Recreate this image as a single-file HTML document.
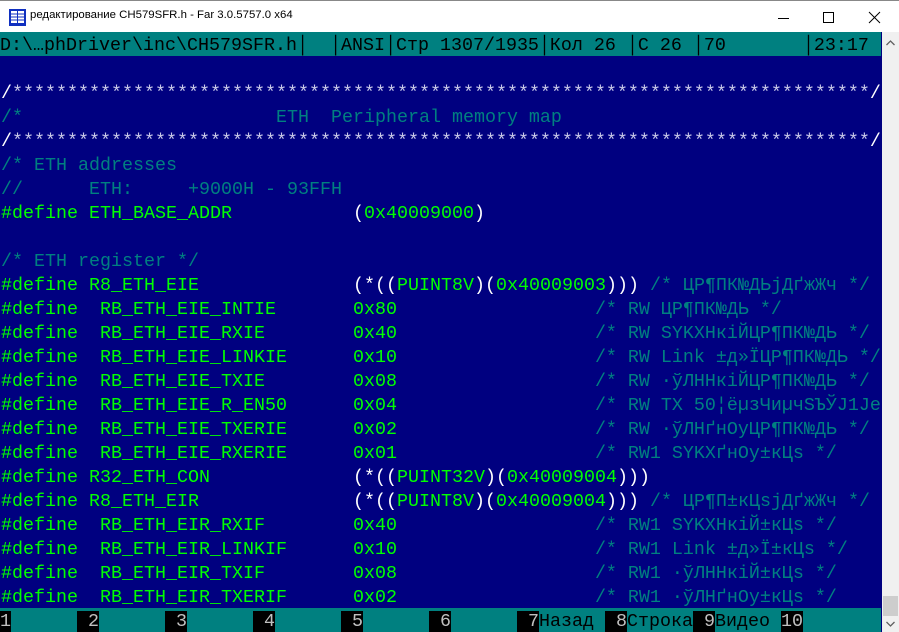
<!DOCTYPE html>
<html><head><meta charset="utf-8"><style>
*{margin:0;padding:0;box-sizing:border-box}
body{width:899px;height:632px;overflow:hidden;background:#fff;position:relative;font-family:"Liberation Mono","DejaVu Sans Mono",monospace}
#title{position:absolute;left:0;top:0;width:899px;height:32px;background:#fff;border-top:1px solid #888}
#title .t{position:absolute;left:30px;top:8px;font:11.4px "Liberation Sans","DejaVu Sans",sans-serif;color:#000}
#con{position:absolute;left:0;top:32px;width:882px;height:600px;background:#000080;overflow:hidden}
.r{position:absolute;left:1px;width:880px;height:24px;line-height:24px;padding-top:2px;font-size:18.33px;white-space:pre;overflow:hidden;color:#00ff00}
.c{color:#008080}.w{color:#fff}.s{color:#c8c8e8}.g{color:#00ff00}
.st{background:#008080;color:#000;left:0;width:881px}
.kb{background:#008080;color:#000;left:0;width:881px}
.k{background:#000;color:#c0c0c0}
#sb{position:absolute;left:882px;top:32px;width:17px;height:600px;background:#f0f0f0}
</style></head><body>
<div id="title">
<svg style="position:absolute;left:9px;top:8px" width="17" height="17" viewBox="0 0 17 17"><rect x="0" y="0" width="17" height="17" fill="#1030c0"/><rect x="2" y="2" width="6" height="12" fill="#fff"/><rect x="9" y="2" width="6" height="12" fill="#fff"/><g stroke="#1030c0" stroke-width="1"><line x1="2" y1="5" x2="8" y2="5"/><line x1="2" y1="8" x2="8" y2="8"/><line x1="2" y1="11" x2="8" y2="11"/><line x1="9" y1="5" x2="15" y2="5"/><line x1="9" y1="8" x2="15" y2="8"/><line x1="9" y1="11" x2="15" y2="11"/></g></svg>
<div class="t">редактирование CH579SFR.h - Far 3.0.5757.0 x64</div>
<svg style="position:absolute;left:778px;top:10px" width="110" height="14"><line x1="0" y1="7.5" x2="11" y2="7.5" stroke="#000"/><rect x="45.5" y="1.5" width="10" height="10" fill="none" stroke="#000"/><path d="M91 1 L102 12 M102 1 L91 12" stroke="#000"/></svg>
</div>
<div id="con">
<div class="r st" style="top:0">D:\…phDriver\inc\CH579SFR.h│  │ANSI│Стр 1307/1935│Кол 26 │С 26 │70       │23:17</div>
<div class="r s" style="top:48px"><span class="w">/</span>******************************************************************************<span class="w">/</span></div>
<div class="r c" style="top:72px">/*                       ETH  Peripheral memory map</div>
<div class="r s" style="top:96px"><span class="w">/</span>******************************************************************************<span class="w">/</span></div>
<div class="r c" style="top:120px">/* ETH addresses</div>
<div class="r c" style="top:144px">//      ETH:     +9000H - 93FFH</div>
<div class="r" style="top:168px">#define ETH_BASE_ADDR           <span class="w">(</span>0x40009000<span class="w">)</span></div>
<div class="r c" style="top:216px">/* ETH register */</div>
<div class="r" style="top:240px">#define R8_ETH_EIE              <span class="w">(*((</span>PUINT8V<span class="w">)(</span>0x40009003<span class="w">)))</span> <span class="c">/* ЦР¶ПК№ДЬјДґжЖч */</span></div>
<div class="r" style="top:264px">#define  RB_ETH_EIE_INTIE       0x80                  <span class="c">/* RW ЦР¶ПК№ДЬ */</span></div>
<div class="r" style="top:288px">#define  RB_ETH_EIE_RXIE        0x40                  <span class="c">/* RW SYKXНкiЙЦР¶ПК№ДЬ */</span></div>
<div class="r" style="top:312px">#define  RB_ETH_EIE_LINKIE      0x10                  <span class="c">/* RW Link ±д»ЇЦР¶ПК№ДЬ */</span></div>
<div class="r" style="top:336px">#define  RB_ETH_EIE_TXIE        0x08                  <span class="c">/* RW ·ўЛННкiЙЦР¶ПК№ДЬ */</span></div>
<div class="r" style="top:360px">#define  RB_ETH_EIE_R_EN50      0x04                  <span class="c">/* RW TX 50¦ёµзЧиµчSЪЎJ1Je</span></div>
<div class="r" style="top:384px">#define  RB_ETH_EIE_TXERIE      0x02                  <span class="c">/* RW ·ўЛНґнОуЦР¶ПК№ДЬ */</span></div>
<div class="r" style="top:408px">#define  RB_ETH_EIE_RXERIE      0x01                  <span class="c">/* RW1 SYKXґнОу±кЦs */</span></div>
<div class="r" style="top:432px">#define R32_ETH_CON             <span class="w">(*((</span>PUINT32V<span class="w">)(</span>0x40009004<span class="w">)))</span></div>
<div class="r" style="top:456px">#define R8_ETH_EIR              <span class="w">(*((</span>PUINT8V<span class="w">)(</span>0x40009004<span class="w">)))</span> <span class="c">/* ЦР¶П±кЦsјДґжЖч */</span></div>
<div class="r" style="top:480px">#define  RB_ETH_EIR_RXIF        0x40                  <span class="c">/* RW1 SYKXНкiЙ±кЦs */</span></div>
<div class="r" style="top:504px">#define  RB_ETH_EIR_LINKIF      0x10                  <span class="c">/* RW1 Link ±д»Ї±кЦs */</span></div>
<div class="r" style="top:528px">#define  RB_ETH_EIR_TXIF        0x08                  <span class="c">/* RW1 ·ўЛННкiЙ±кЦs */</span></div>
<div class="r" style="top:552px">#define  RB_ETH_EIR_TXERIF      0x02                  <span class="c">/* RW1 ·ўЛНґнОу±кЦs */</span></div>
<div class="r kb" style="top:576px"><span class="k">1</span>      <span class="k"> 2</span>      <span class="k"> 3</span>      <span class="k"> 4</span>      <span class="k"> 5</span>      <span class="k"> 6</span>      <span class="k"> 7</span>Назад <span class="k"> 8</span>Строка<span class="k"> 9</span>Видео <span class="k">10</span>       </div>
</div>
<div id="sb">
<svg style="position:absolute;left:4px;top:8px" width="9" height="6"><path d="M0.5 5 L4.5 1 L8.5 5" fill="none" stroke="#606060" stroke-width="1.3"/></svg>
<div style="position:absolute;left:1px;top:564px;width:15px;height:20px;background:#cdcdcd"></div>
<svg style="position:absolute;left:4px;top:589px" width="9" height="6"><path d="M0.5 1 L4.5 5 L8.5 1" fill="none" stroke="#606060" stroke-width="1.3"/></svg>
</div>
</body></html>
